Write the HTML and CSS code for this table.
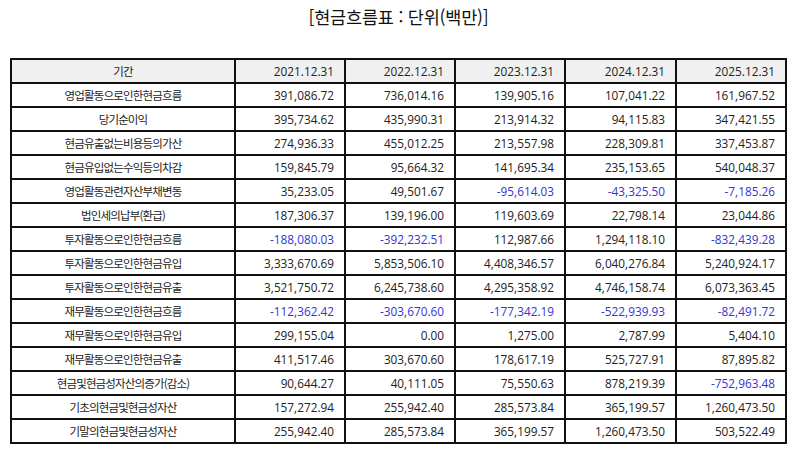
FILE: index.html
```html
<!DOCTYPE html>
<html lang="ko">
<head>
<meta charset="utf-8">
<title>현금흐름표</title>
<link rel="stylesheet" href="styles.css">
</head>
<body>
<div class="page">
  <h1 class="title">[현금흐름표 : 단위(백만)]</h1>
  <table class="cf">
    <colgroup>
      <col class="c-label"><col class="c-n"><col class="c-n"><col class="c-n"><col class="c-n5"><col class="c-n">
    </colgroup>
    <thead>
      <tr><th class="lbl">기간</th><th>2021.12.31</th><th>2022.12.31</th><th>2023.12.31</th><th>2024.12.31</th><th>2025.12.31</th></tr>
    </thead>
    <tbody>
      <tr><td class="lbl">영업활동으로인한현금흐름</td><td>391,086.72</td><td>736,014.16</td><td>139,905.16</td><td>107,041.22</td><td>161,967.52</td></tr>
      <tr><td class="lbl">당기순이익</td><td>395,734.62</td><td>435,990.31</td><td>213,914.32</td><td>94,115.83</td><td>347,421.55</td></tr>
      <tr><td class="lbl">현금유출없는비용등의가산</td><td>274,936.33</td><td>455,012.25</td><td>213,557.98</td><td>228,309.81</td><td>337,453.87</td></tr>
      <tr><td class="lbl">현금유입없는수익등의차감</td><td>159,845.79</td><td>95,664.32</td><td>141,695.34</td><td>235,153.65</td><td>540,048.37</td></tr>
      <tr><td class="lbl">영업활동관련자산부채변동</td><td>35,233.05</td><td>49,501.67</td><td class="neg">-95,614.03</td><td class="neg">-43,325.50</td><td class="neg">-7,185.26</td></tr>
      <tr><td class="lbl">법인세의납부(환급)</td><td>187,306.37</td><td>139,196.00</td><td>119,603.69</td><td>22,798.14</td><td>23,044.86</td></tr>
      <tr><td class="lbl">투자활동으로인한현금흐름</td><td class="neg">-188,080.03</td><td class="neg">-392,232.51</td><td>112,987.66</td><td>1,294,118.10</td><td class="neg">-832,439.28</td></tr>
      <tr><td class="lbl">투자활동으로인한현금유입</td><td>3,333,670.69</td><td>5,853,506.10</td><td>4,408,346.57</td><td>6,040,276.84</td><td>5,240,924.17</td></tr>
      <tr><td class="lbl">투자활동으로인한현금유출</td><td>3,521,750.72</td><td>6,245,738.60</td><td>4,295,358.92</td><td>4,746,158.74</td><td>6,073,363.45</td></tr>
      <tr><td class="lbl">재무활동으로인한현금흐름</td><td class="neg">-112,362.42</td><td class="neg">-303,670.60</td><td class="neg">-177,342.19</td><td class="neg">-522,939.93</td><td class="neg">-82,491.72</td></tr>
      <tr><td class="lbl">재무활동으로인한현금유입</td><td>299,155.04</td><td>0.00</td><td>1,275.00</td><td>2,787.99</td><td>5,404.10</td></tr>
      <tr><td class="lbl">재무활동으로인한현금유출</td><td>411,517.46</td><td>303,670.60</td><td>178,617.19</td><td>525,727.91</td><td>87,895.82</td></tr>
      <tr><td class="lbl">현금및현금성자산의증가(감소)</td><td>90,644.27</td><td>40,111.05</td><td>75,550.63</td><td>878,219.39</td><td class="neg">-752,963.48</td></tr>
      <tr><td class="lbl">기초의현금및현금성자산</td><td>157,272.94</td><td>255,942.40</td><td>285,573.84</td><td>365,199.57</td><td>1,260,473.50</td></tr>
      <tr><td class="lbl">기말의현금및현금성자산</td><td>255,942.40</td><td>285,573.84</td><td>365,199.57</td><td>1,260,473.50</td><td>503,522.49</td></tr>
    </tbody>
  </table>
</div>
</body>
</html>
```
FILE: styles.css
```css
html, body {
  margin: 0;
  padding: 0;
  background: #ffffff;
}
.page {
  padding: 0 0 0 10px;
  font-family: "Open Sans", "Noto Sans CJK KR", sans-serif;
  color: #222222;
}
.title {
  margin: 0;
  height: 58px;
  box-sizing: border-box;
  padding-top: 5px;
  width: 777px;
  text-align: center;
  font-family: "Noto Sans CJK KR", sans-serif;
  font-weight: 400;
  font-size: 17.5px;
  line-height: 24px;
  letter-spacing: -0.2px;
  color: #111111;
}
.cf {
  width: 777px;
  table-layout: fixed;
  border-collapse: separate;
  border-spacing: 0;
  border: 1px solid #111111;
  font-size: 11.8px;
}
.c-label { width: 224px; }
.c-n { width: 110px; }
.c-n5 { width: 111px; }
.cf th, .cf td {
  border: 1px solid #111111;
  height: 24px;
  box-sizing: border-box;
  padding: 0 10px 0 4px;
  text-align: right;
  font-weight: 400;
  white-space: nowrap;
  line-height: 20px;
}
.cf th {
  background: #f0f0f0;
}
.cf .lbl {
  text-align: center;
  padding: 0 4px;
  font-family: "Noto Sans CJK KR", sans-serif;
  font-size: 11.5px;
  letter-spacing: -0.85px;
}
.cf .neg {
  color: #3535d0;
}
```
